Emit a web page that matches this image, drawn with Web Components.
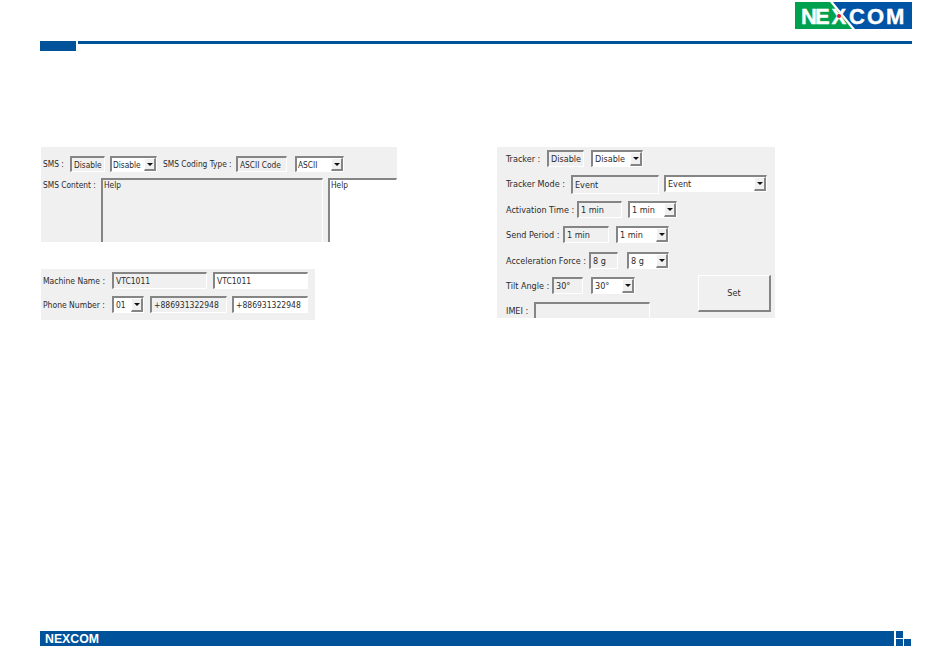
<!DOCTYPE html>
<html>
<head>
<meta charset="utf-8">
<style>
html, body { margin: 0; padding: 0; background: #fff; }
body { width: 950px; height: 664px; overflow: hidden; font-family: "Liberation Sans", Arial, sans-serif; color: #333; }
.page { display: flex; flex-direction: column; height: 664px; }
.columns { flex: 1; display: flex; align-items: flex-start; padding: 94px 0 0 41px; }
.col-left { width: 456px; display: flex; flex-direction: column; gap: 27px; }
</style>
</head>
<body>
<div class="page">
  <doc-header></doc-header>
  <div class="columns">
    <div class="col-left">
      <form-panel style="--w:356px;--h:95px;--pad:9px 0 0 2px;--gap:6px;--fs:8.3px">
        <form-row>
          <win-label w="27" h="16">SMS :</win-label>
          <win-field w="35" h="16">Disable</win-field>
          <win-combo w="47" h="16" style="margin-left:5px">Disable</win-combo>
          <win-label w="67" h="16" style="margin-left:6px">SMS Coding Type :</win-label>
          <win-field w="51" h="16" style="margin-left:6px">ASCII Code</win-field>
          <win-combo w="49" h="16" style="margin-left:8px">ASCII</win-combo>
        </form-row>
        <form-row>
          <win-label w="58" h="14">SMS Content :</win-label>
          <win-field w="222" h="65" top>Help</win-field>
          <win-input w="69" h="65" top style="margin-left:5px">Help</win-input>
        </form-row>
      </form-panel>
      <form-panel style="--w:274px;--h:51px;--pad:3px 0 0 2px;--gap:7px;--fs:8.5px;--cpad:2px">
        <form-row>
          <win-label w="69" h="17">Machine Name :</win-label>
          <win-field w="95" h="17">VTC1011</win-field>
          <win-input w="95" h="17" style="margin-left:6px">VTC1011</win-input>
        </form-row>
        <form-row>
          <win-label w="69" h="17">Phone Number :</win-label>
          <win-combo w="32" h="17">01</win-combo>
          <win-field w="77" h="17" style="margin-left:6px">+886931322948</win-field>
          <win-input w="76" h="17" style="margin-left:5px">+886931322948</win-input>
        </form-row>
      </form-panel>
    </div>
    <form-panel style="--w:278px;--h:171px;--pad:3px 0 0 9px;--gap:0;--fs:9px;--cpad:2px">
      <form-row style="height:25px">
        <win-label w="41" h="17">Tracker :</win-label>
        <win-field w="37" h="17">Disable</win-field>
        <win-combo w="52" h="17" style="margin-left:7px">Disable</win-combo>
      </form-row>
      <form-row style="height:26px">
        <win-label w="65" h="17">Tracker Mode :</win-label>
        <win-field w="88" h="19">Event</win-field>
        <win-combo w="103" h="17" style="margin-left:5px">Event</win-combo>
      </form-row>
      <form-row style="height:25px">
        <win-label w="71" h="17">Activation Time :</win-label>
        <win-field w="45" h="17">1 min</win-field>
        <win-combo w="49" h="17" style="margin-left:6px">1 min</win-combo>
      </form-row>
      <form-row style="height:26px">
        <win-label w="57" h="17">Send Period :</win-label>
        <win-field w="46" h="17">1 min</win-field>
        <win-combo w="53" h="17" style="margin-left:7px">1 min</win-combo>
      </form-row>
      <form-row style="height:25px">
        <win-label w="83" h="17">Acceleration Force :</win-label>
        <win-field w="29" h="17">8 g</win-field>
        <win-combo w="42" h="17" style="margin-left:9px">8 g</win-combo>
      </form-row>
      <form-row style="height:25px">
        <win-label w="46" h="17">Tilt Angle :</win-label>
        <win-field w="31" h="17">30°</win-field>
        <win-combo w="44" h="17" style="margin-left:8px">30°</win-combo>
      </form-row>
      <form-row style="height:16px">
        <win-label w="28" h="17">IMEI :</win-label>
        <win-field w="116" h="17"></win-field>
      </form-row>
      <win-button>Set</win-button>
    </form-panel>
  </div>
  <doc-footer></doc-footer>
</div>
<script>
// shared look of the sunken Windows controls
const sunken = `
  border-style: solid;
  border-width: 2px 1px 1px 2px;
  border-color: #858585 #fff #fff #858585;
  box-sizing: border-box;
`;

function sizeFromAttrs(el) {
  if (el.hasAttribute('w')) el.style.width = el.getAttribute('w') + 'px';
  if (el.hasAttribute('h')) el.style.height = el.getAttribute('h') + 'px';
}

class DocHeader extends HTMLElement {
  constructor() {
    super();
    this.attachShadow({ mode: 'open' });
    this.shadowRoot.innerHTML = `
      <style>
        :host { display: block; height: 51px; padding: 2px 38px 0 40px; box-sizing: content-box; }
        .logo { display: block; margin-left: auto; width: 117px; height: 27px; }
        .logo text { font-family: "Liberation Sans", Arial, sans-serif; font-weight: 700; font-size: 22px; fill: #fff; stroke: #fff; stroke-width: .4px; }
        .rule { display: flex; gap: 2px; margin-top: 12px; align-items: flex-start; }
        .tab { width: 36px; height: 10px; background: #00529b; }
        .line { flex: 1; height: 3px; background: #00529b; }
      </style>
      <svg class="logo" viewBox="0 0 117 27">
        <polygon points="0,0 35,0 57,27 0,27" fill="#00a14e"/>
        <polygon points="38,0 117,0 117,27 60,27" fill="#0054a6"/>
        <text y="22" x="6 20 36.5 54 72 91">NEXCOM</text>
        <circle cx="44" cy="14" r="2" fill="#e8112d"/>
      </svg>
      <div class="rule"><div class="tab"></div><div class="line"></div></div>
    `;
  }
}

class DocFooter extends HTMLElement {
  constructor() {
    super();
    this.attachShadow({ mode: 'open' });
    this.shadowRoot.innerHTML = `
      <style>
        :host { display: flex; gap: 2px; padding: 0 39px 18px 40px; align-items: flex-start; }
        .bar { flex: 1; height: 15px; background: #00529b; display: flex; align-items: center; padding-left: 4px; }
        .bar svg { display: block; width: 58px; height: 13px; }
        .bar text { font-family: "Liberation Sans", Arial, sans-serif; font-weight: 700; font-size: 12.5px; fill: #fff; }
        .marks { display: grid; grid-template-columns: 7px 7px; grid-template-rows: 7px 7px; gap: 1px; }
        .marks i { background: #00529b; }
        .marks i:nth-child(2) { visibility: hidden; }
      </style>
      <div class="bar">
        <svg viewBox="0 0 58 13"><text x="1" y="11" textLength="54" lengthAdjust="spacingAndGlyphs">NEXCOM</text></svg>
      </div>
      <div class="marks"><i></i><i></i><i></i><i></i></div>
    `;
  }
}

class FormPanel extends HTMLElement {
  constructor() {
    super();
    this.attachShadow({ mode: 'open' });
    this.shadowRoot.innerHTML = `
      <style>
        :host {
          display: flex; flex-direction: column; position: relative;
          width: var(--w); height: var(--h); padding: var(--pad); gap: var(--gap);
          box-sizing: border-box; background: #f0f0f0; overflow: hidden;
          font-family: "DejaVu Sans Condensed", "DejaVu Sans", sans-serif; font-stretch: condensed;
          font-size: var(--fs); color: #2b2b2b;
        }
      </style>
      <slot></slot>
    `;
  }
}

class FormRow extends HTMLElement {
  constructor() {
    super();
    this.attachShadow({ mode: 'open' });
    this.shadowRoot.innerHTML = `
      <style>:host { display: flex; align-items: flex-start; flex-shrink: 0; }</style>
      <slot></slot>
    `;
  }
}

class WinLabel extends HTMLElement {
  constructor() {
    super();
    this.attachShadow({ mode: 'open' });
    this.shadowRoot.innerHTML = `
      <style>:host { display: flex; align-items: center; white-space: nowrap; flex-shrink: 0; }</style>
      <slot></slot>
    `;
  }
  connectedCallback() { sizeFromAttrs(this); }
}

class WinField extends HTMLElement {
  constructor() {
    super();
    this.attachShadow({ mode: 'open' });
    this.shadowRoot.innerHTML = `
      <style>
        :host {
          display: flex; align-items: center; flex-shrink: 0; padding-left: 2px;
          white-space: nowrap; overflow: hidden; background: #f0f0f0; ${sunken}
        }
        :host([top]) { align-items: flex-start; padding-left: 1px; }
      </style>
      <slot></slot>
    `;
  }
  connectedCallback() { sizeFromAttrs(this); }
}

class WinInput extends HTMLElement {
  constructor() {
    super();
    this.attachShadow({ mode: 'open' });
    this.shadowRoot.innerHTML = `
      <style>
        :host {
          display: flex; align-items: center; flex-shrink: 0; padding-left: 2px;
          white-space: nowrap; overflow: hidden; background: #fff; ${sunken}
        }
        :host([top]) { align-items: flex-start; padding-left: 1px; }
      </style>
      <slot></slot>
    `;
  }
  connectedCallback() { sizeFromAttrs(this); }
}

class WinCombo extends HTMLElement {
  constructor() {
    super();
    this.attachShadow({ mode: 'open' });
    this.shadowRoot.innerHTML = `
      <style>
        :host {
          display: flex; align-items: center; flex-shrink: 0; justify-content: space-between;
          padding-left: var(--cpad, 1px); white-space: nowrap; background: #fff; ${sunken}
        }
        .btn {
          width: 12px; height: 100%; box-sizing: border-box; background: #f0f0f0;
          border-style: solid; border-width: 1px 2px 2px 1px;
          border-color: #fff #858585 #858585 #fff;
          display: flex; align-items: center; justify-content: center; flex-shrink: 0;
        }
        .btn::after {
          content: ""; width: 0; height: 0;
          border-left: 3px solid transparent; border-right: 3px solid transparent; border-top: 3px solid #111;
        }
      </style>
      <span><slot></slot></span>
      <div class="btn"></div>
    `;
  }
  connectedCallback() { sizeFromAttrs(this); }
}

class WinButton extends HTMLElement {
  constructor() {
    super();
    this.attachShadow({ mode: 'open' });
    this.shadowRoot.innerHTML = `
      <style>
        :host {
          position: absolute; left: 201px; top: 128px; width: 73px; height: 37px;
          display: flex; align-items: center; justify-content: center;
          box-sizing: border-box; background: #f0f0f0;
          border-style: solid; border-width: 1px 2px 2px 1px;
          border-color: #fff #858585 #858585 #fff;
        }
      </style>
      <slot></slot>
    `;
  }
}

customElements.define('doc-header', DocHeader);
customElements.define('doc-footer', DocFooter);
customElements.define('form-panel', FormPanel);
customElements.define('form-row', FormRow);
customElements.define('win-label', WinLabel);
customElements.define('win-field', WinField);
customElements.define('win-input', WinInput);
customElements.define('win-combo', WinCombo);
customElements.define('win-button', WinButton);
</script>
</body>
</html>
